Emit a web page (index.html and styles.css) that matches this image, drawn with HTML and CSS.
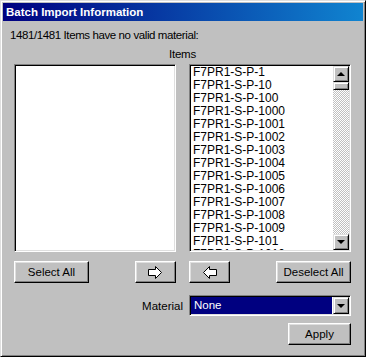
FILE: index.html
```html
<!DOCTYPE html>
<html lang="en">
<head>
    <meta charset="UTF-8">
    <title>Batch Import Information</title>
    <link rel="stylesheet" href="styles.css">
</head>
<body>
    <div class="window">
        <div class="titlebar">Batch Import Information</div>
        <div class="panel">
            <p class="summary">1481/1481 Items have no valid material:</p>
            <div class="items-label">Items</div>

            <div class="columns lists">
                <div class="listbox"></div>
                <div class="listbox">
                    <ul class="list-items">
                        <li>F7PR1-S-P-1</li>
                        <li>F7PR1-S-P-10</li>
                        <li>F7PR1-S-P-100</li>
                        <li>F7PR1-S-P-1000</li>
                        <li>F7PR1-S-P-1001</li>
                        <li>F7PR1-S-P-1002</li>
                        <li>F7PR1-S-P-1003</li>
                        <li>F7PR1-S-P-1004</li>
                        <li>F7PR1-S-P-1005</li>
                        <li>F7PR1-S-P-1006</li>
                        <li>F7PR1-S-P-1007</li>
                        <li>F7PR1-S-P-1008</li>
                        <li>F7PR1-S-P-1009</li>
                        <li>F7PR1-S-P-101</li>
                        <li>F7PR1-S-P-1010</li>
                    </ul>
                    <div class="scrollbar">
                        <div class="sb-btn"><span class="tri tri-up"></span></div>
                        <div class="sb-track"><div class="sb-thumb"></div></div>
                        <div class="sb-btn"><span class="tri tri-down"></span></div>
                    </div>
                </div>
            </div>

            <div class="columns actions">
                <div class="action-group">
                    <button class="btn btn-wide">Select All</button>
                    <button class="btn btn-arrow">
                        <svg width="15" height="13" viewBox="0 0 15 13"><polygon points="0.5,3.5 7.5,3.5 7.5,0.5 13.5,6.5 7.5,12.5 7.5,9.5 0.5,9.5" fill="#fff" stroke="#000" stroke-width="1"/></svg>
                    </button>
                </div>
                <div class="action-group">
                    <button class="btn btn-arrow">
                        <svg width="15" height="13" viewBox="0 0 15 13"><polygon points="14.5,3.5 7.5,3.5 7.5,0.5 1.5,6.5 7.5,12.5 7.5,9.5 14.5,9.5" fill="#fff" stroke="#000" stroke-width="1"/></svg>
                    </button>
                    <button class="btn btn-wide">Deselect All</button>
                </div>
            </div>

            <div class="material-row">
                <span class="material-label">Material</span>
                <div class="combo">
                    <div class="combo-value">None</div>
                    <div class="sb-btn combo-btn"><span class="tri tri-down"></span></div>
                </div>
            </div>

            <div class="apply-row">
                <button class="btn btn-apply">Apply</button>
            </div>
        </div>
    </div>
</body>
</html>
```

FILE: styles.css
```css
* {
    box-sizing: border-box;
}
body {
    margin: 0;
    background: #c0c0c0;
    font-family: "Liberation Sans", Arial, sans-serif;
    font-size: 11px;
    color: #000;
}
.window {
    width: 366px;
    height: 357px;
    padding: 2px;
    background: #c0c0c0;
    border: 1px solid;
    border-color: #dfdfdf #000 #000 #dfdfdf;
    box-shadow: inset 1px 1px #fff, inset -1px -1px #808080;
}
.titlebar {
    height: 18px;
    line-height: 18px;
    padding-left: 3px;
    background: linear-gradient(to right, #000080, #1084d0);
    color: #fff;
    font-weight: bold;
    font-size: 11.5px;
}
.panel {
    padding: 8px 12px 0 11px;
}
.summary {
    margin: 0 0 0 -4px;
    line-height: 13px;
    font-size: 11.5px;
    letter-spacing: -0.4px;
}
.items-label {
    margin-top: 6px;
    line-height: 13px;
    text-align: center;
    font-size: 11.5px;
    letter-spacing: -0.2px;
}
.columns {
    display: grid;
    grid-template-columns: 162px 162px;
    column-gap: 13px;
}
.lists {
    margin-top: 3px;
}
.listbox {
    height: 188px;
    display: flex;
    background: #fff;
    border: 1px solid;
    border-color: #808080 #fff #fff #808080;
    box-shadow: inset 1px 1px #000, inset -1px -1px #dfdfdf;
    padding: 1px;
    overflow: hidden;
}
.list-items {
    flex: 1;
    list-style: none;
    margin: 0;
    padding: 0 0 0 2px;
    overflow: hidden;
}
.list-items li {
    height: 13px;
    line-height: 13px;
    font-size: 12px;
    white-space: nowrap;
}
.scrollbar {
    width: 16px;
    display: flex;
    flex-direction: column;
}
.sb-btn {
    width: 16px;
    height: 16px;
    flex: none;
    display: flex;
    align-items: center;
    justify-content: center;
    background: #c0c0c0;
    border: 1px solid;
    border-color: #dfdfdf #000 #000 #dfdfdf;
    box-shadow: inset 1px 1px #fff, inset -1px -1px #808080;
}
.sb-track {
    flex: 1;
    background: repeating-conic-gradient(#fff 0 25%, #c0c0c0 0 50%) 0 0 / 2px 2px;
}
.sb-thumb {
    height: 8px;
    background: #c0c0c0;
    border: 1px solid;
    border-color: #dfdfdf #000 #000 #dfdfdf;
    box-shadow: inset 1px 1px #fff, inset -1px -1px #808080;
}
.tri {
    width: 0;
    height: 0;
    border-left: 4px solid transparent;
    border-right: 4px solid transparent;
}
.tri-up {
    border-bottom: 4px solid #000;
}
.tri-down {
    border-top: 4px solid #000;
}
.actions {
    margin-top: 9px;
}
.action-group {
    display: flex;
    justify-content: space-between;
}
.btn {
    height: 22px;
    padding: 0;
    background: #c0c0c0;
    font-family: inherit;
    font-size: 11.5px;
    color: #000;
    border: 1px solid;
    border-color: #fff #000 #000 #fff;
    box-shadow: inset -1px -1px #808080, inset 1px 1px #dfdfdf;
    display: flex;
    align-items: center;
    justify-content: center;
}
.btn-wide {
    width: 75px;
}
.btn-arrow {
    width: 41px;
}
.material-row {
    margin-top: 12px;
    display: flex;
    justify-content: flex-end;
    align-items: center;
    gap: 6px;
}
.material-label {
    font-size: 11.5px;
}
.combo {
    width: 162px;
    height: 21px;
    display: flex;
    padding: 1px;
    background: #fff;
    border: 1px solid;
    border-color: #808080 #fff #fff #808080;
    box-shadow: inset 1px 1px #000, inset -1px -1px #dfdfdf;
}
.combo-value {
    flex: 1;
    background: #000080;
    color: #fff;
    font-size: 11.5px;
    line-height: 17px;
    padding-left: 3px;
    margin-right: 1px;
}
.combo-btn {
    height: 17px;
}
.apply-row {
    margin-top: 7px;
    display: flex;
    justify-content: flex-end;
}
.btn-apply {
    width: 63px;
}
```
